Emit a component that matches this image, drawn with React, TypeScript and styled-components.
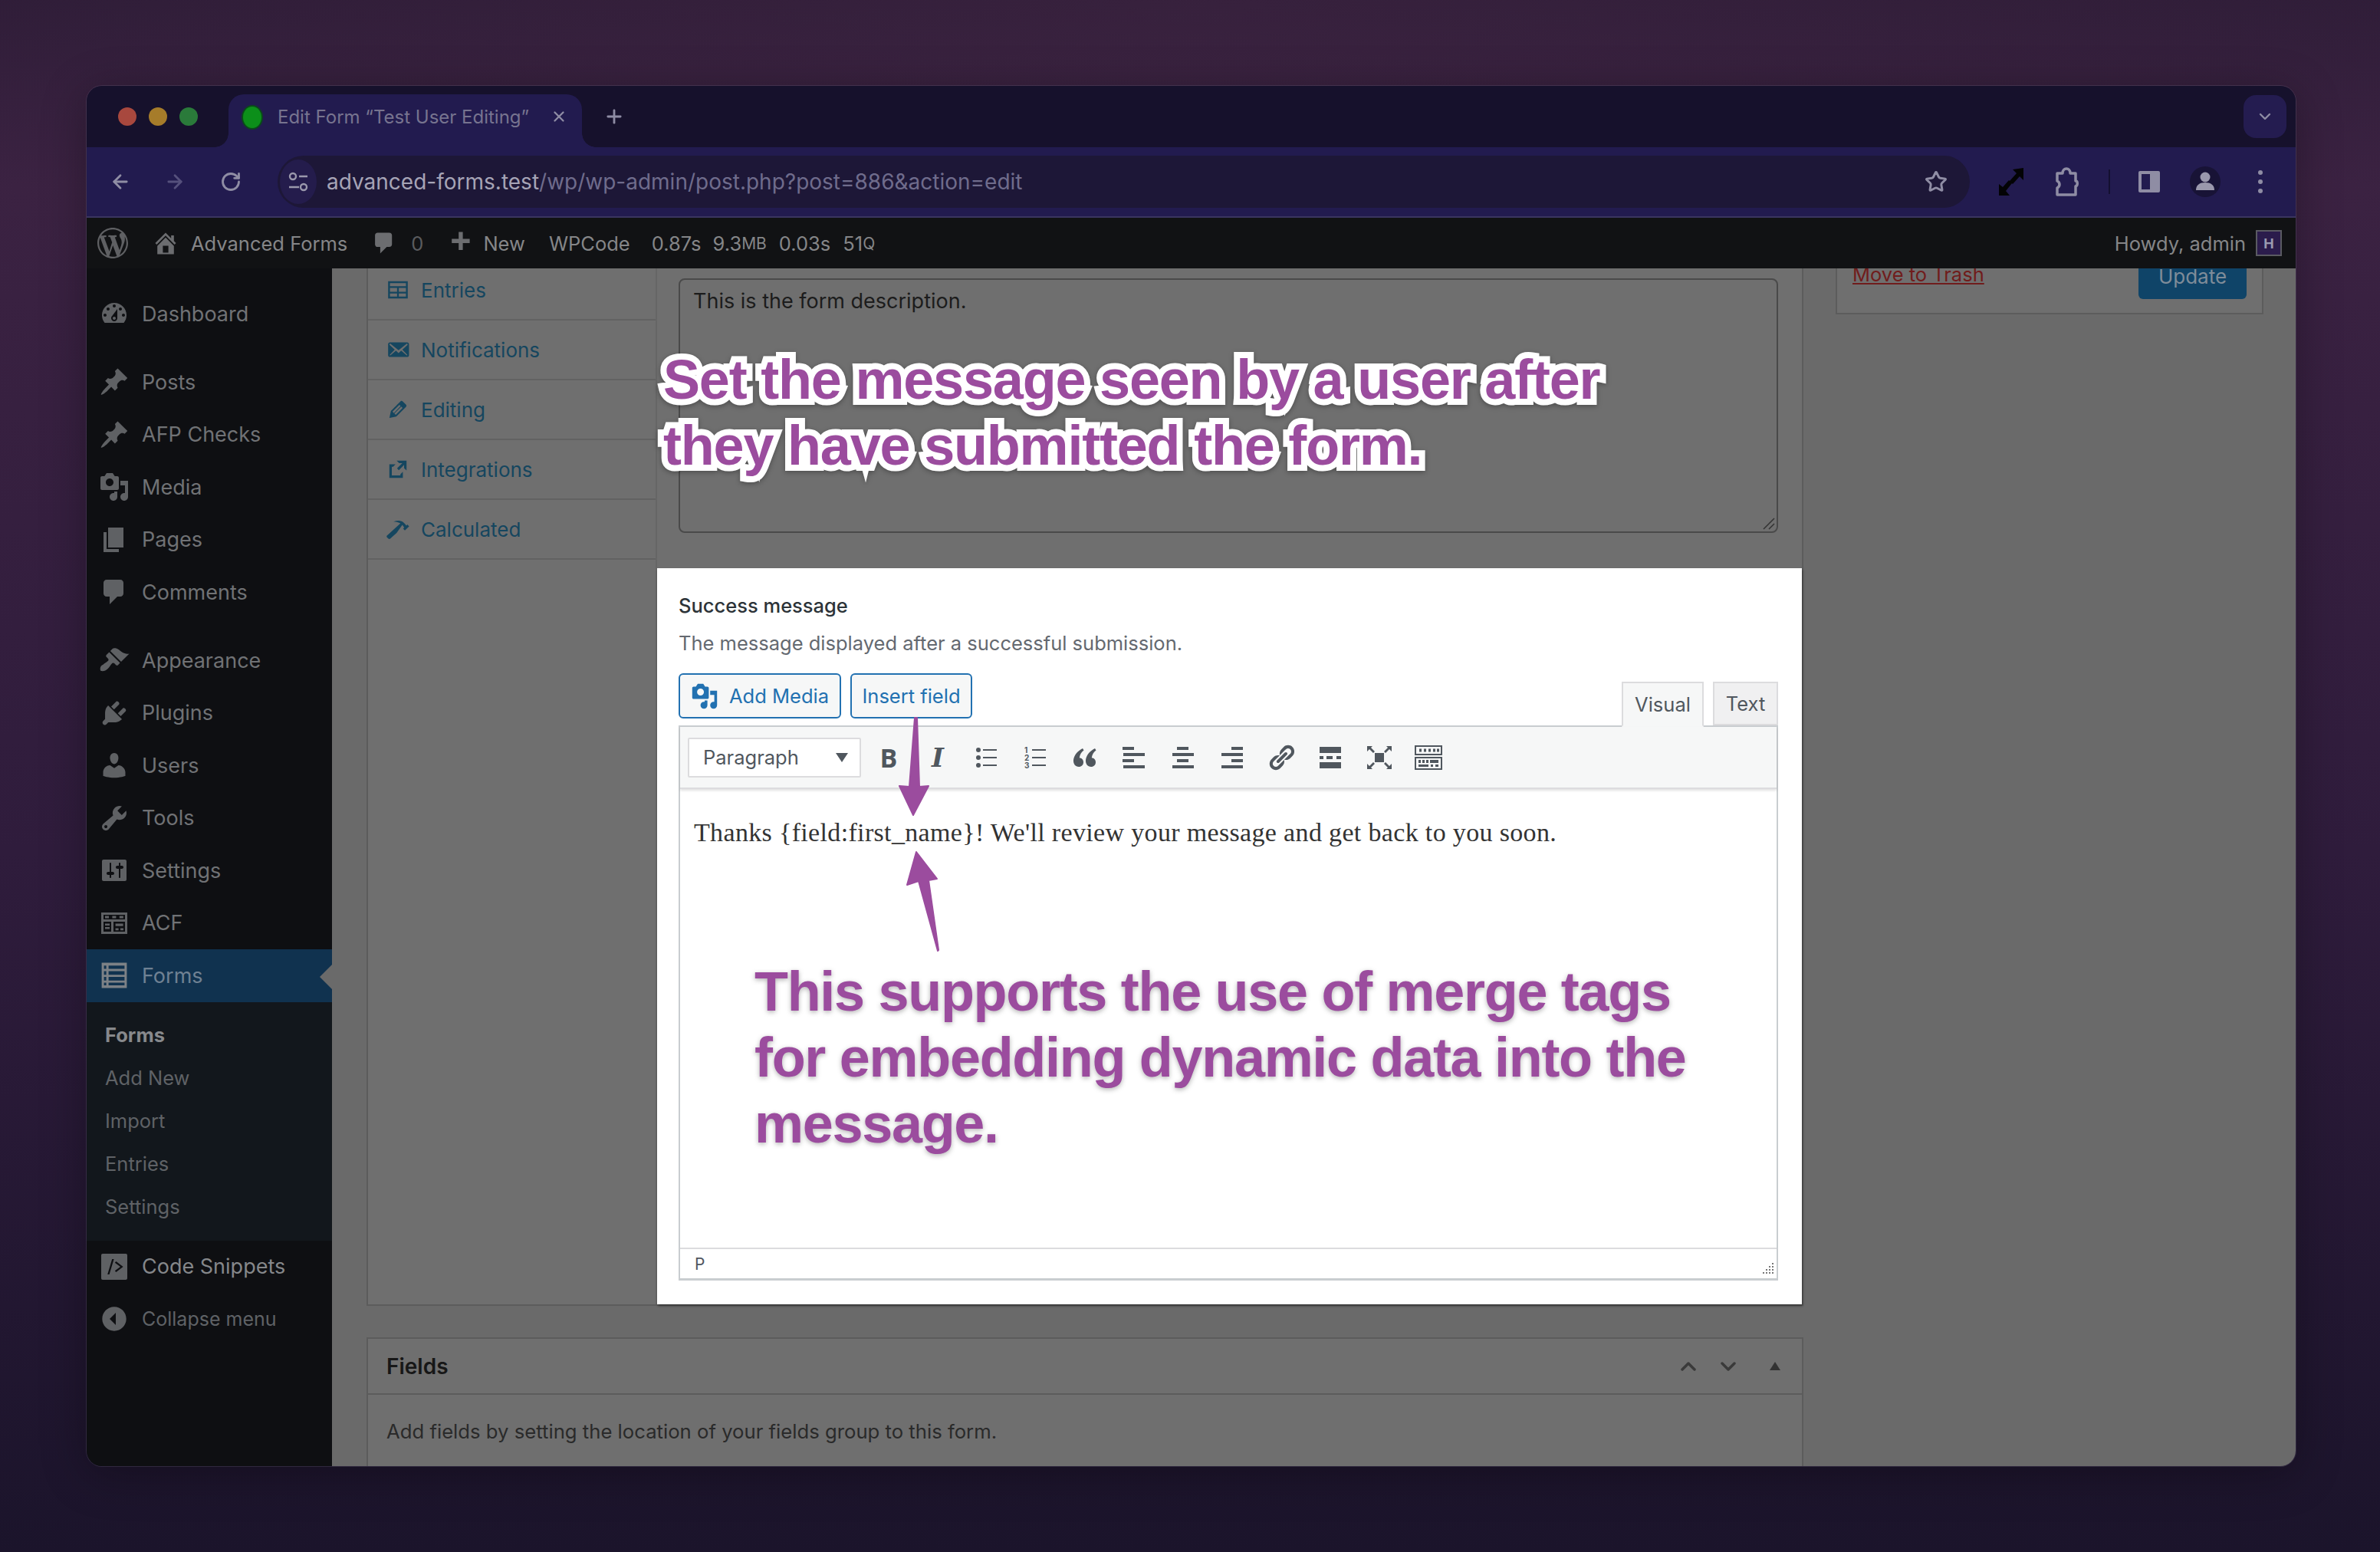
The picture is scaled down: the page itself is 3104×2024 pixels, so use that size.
import React from 'react';
import styled, { createGlobalStyle } from 'styled-components';
import { ArrowLeft, ArrowRight, RotateCw, Star, Plus, X, ChevronDown, ChevronUp } from 'lucide-react';

const GlobalStyle = createGlobalStyle`
  html, body { margin: 0; padding: 0; }
  body { width: 3104px; height: 2024px; overflow: hidden; font-family: Inter, "Liberation Sans", sans-serif; }
`;

// dashicons, 20x20 grid
const dash: Record<string, string> = {
  wp: 'M20 10c0-5.51-4.49-10-10-10C4.48 0 0 4.49 0 10c0 5.52 4.48 10 10 10 5.51 0 10-4.48 10-10zM7.78 15.37L4.37 6.22c.55-.02 1.17-.08 1.17-.08.5-.06.44-1.13-.06-1.11 0 0-1.45.11-2.37.11-.18 0-.37 0-.58-.01C4.12 2.69 6.87 1.11 10 1.11c2.33 0 4.45.87 6.05 2.34-.68-.11-1.65.39-1.65 1.58 0 .74.45 1.36.9 2.1.35.61.55 1.36.55 2.46 0 1.49-1.4 5-1.4 5l-3.03-8.37c.54-.02.82-.17.82-.17.5-.05.44-1.25-.06-1.22 0 0-1.44.12-2.38.12-.87 0-2.33-.12-2.33-.12-.5-.03-.56 1.2-.06 1.22l.92.08 1.26 3.41zM17.41 10c.24-.64.74-1.87.43-4.25.7 1.29 1.05 2.71 1.05 4.25 0 3.29-1.73 6.24-4.4 7.78.97-2.59 1.94-5.2 2.92-7.78zM6.1 18.09C3.12 16.65 1.11 13.53 1.11 10c0-1.3.23-2.48.72-3.59C3.25 10.3 4.67 14.2 6.1 18.09zm4.03-6.63l2.58 6.98c-.86.29-1.76.45-2.71.45-.79 0-1.57-.11-2.29-.33.81-2.38 1.62-4.74 2.42-7.1z',
  home: 'M16 8.5l1.53 1.53-1.06 1.06L10 4.62l-6.47 6.47-1.06-1.06L10 2.5l4 4v-2h2v4zm-6-2.46l6 5.99V18H4v-5.97zM12 17v-5H8v5h4z',
  comment: 'M5 2h9c1.1 0 2 .9 2 2v7c0 1.1-.9 2-2 2h-2l-5 5v-5H5c-1.1 0-2-.9-2-2V4c0-1.1.9-2 2-2z',
  plus: 'M17 7v3h-5v5H9v-5H4V7h5V2h3v5h5z',
  dashboard: 'M3.76 16h12.48c1.1-1.37 1.76-3.11 1.76-5 0-4.42-3.58-8-8-8s-8 3.58-8 8c0 1.89.66 3.63 1.76 5zM10 4c.55 0 1 .45 1 1s-.45 1-1 1-1-.45-1-1 .45-1 1-1zM6 6c.55 0 1 .45 1 1s-.45 1-1 1-1-.45-1-1 .45-1 1-1zm8 0c.55 0 1 .45 1 1s-.45 1-1 1-1-.45-1-1 .45-1 1-1zm-5.37 5.55L12 7v6c0 1.1-.9 2-2 2s-2-.9-2-2c0-.57.24-1.08.63-1.45zM4 10c.55 0 1 .45 1 1s-.45 1-1 1-1-.45-1-1 .45-1 1-1zm12 0c.55 0 1 .45 1 1s-.45 1-1 1-1-.45-1-1 .45-1 1-1zm-5 3c0-.55-.45-1-1-1s-1 .45-1 1 .45 1 1 1 1-.45 1-1z',
  pin: 'M10.44 3.02l1.82-1.82 6.36 6.35-1.83 1.82c-1.05-.68-2.48-.57-3.41.36l-.75.75c-.92.93-1.04 2.35-.35 3.41l-1.83 1.82-2.41-2.41-2.8 2.79c-.42.42-3.38 2.71-3.8 2.29s1.86-3.39 2.28-3.81l2.79-2.79L4.1 9.36l1.83-1.82c1.05.69 2.48.57 3.4-.36l.75-.75c.93-.92 1.05-2.35.36-3.41z',
  media: 'M13 11V4c0-.55-.45-1-1-1h-1.67L9 1H5L3.67 3H2c-.55 0-1 .45-1 1v7c0 .55.45 1 1 1h10c.55 0 1-.45 1-1zM7 4.5c1.38 0 2.5 1.12 2.5 2.5S8.38 9.5 7 9.5 4.5 8.38 4.5 7 5.62 4.5 7 4.5zM14 6h5v10.5c0 1.38-1.12 2.5-2.5 2.5S14 17.88 14 16.5s1.12-2.5 2.5-2.5c.17 0 .34.02.5.05V9h-3V6zm-4 8.05V13h2v3.5c0 1.38-1.12 2.5-2.5 2.5S7 17.88 7 16.5 8.12 14 9.5 14c.17 0 .34.02.5.05z',
  page: 'M6 15V2h10v13H6zm-1 1h8v2H3V5h2v11z',
  appearance: 'M14.48 11.06L7.41 3.99l1.5-1.5c.5-.56 2.3-.47 3.51.32 1.21.8 1.43 1.28 2.91 2.1 1.18.64 2.45 1.26 4.45.85zm-.71.71L6.7 4.7 4.93 6.47c-.39.39-.39 1.02 0 1.41l1.06 1.06c.39.39.39 1.03 0 1.42-.6.6-1.43 1.11-2.21 1.69-.35.26-.7.53-1.01.84C1.43 13.23.4 14.95 1.1 16.9c1.9.7 3.67-.33 4.99-1.67.31-.31.58-.66.84-1.01.58-.78 1.09-1.61 1.69-2.21.39-.39 1.03-.39 1.42 0l1.06 1.06c.39.39 1.02.39 1.41 0z',
  plugins: 'M13.11 4.36L9.87 7.6 8 5.73l3.24-3.24c.35-.34 1.05-.2 1.56.32.52.51.66 1.21.31 1.55zm-8 1.77l.91-1.12 9.01 9.01-1.19.84c-.71.71-2.63 1.16-3.82 1.16H6.14L4.9 17.26c-.59.59-1.54.59-2.12 0-.59-.58-.59-1.53 0-2.12l1.24-1.24v-3.88c0-1.13.4-3.19 1.09-3.89zm7.26 3.97l3.24-3.24c.34-.35 1.04-.21 1.55.31.52.51.66 1.21.31 1.55l-3.24 3.25z',
  users: 'M10 9.25c-2.27 0-2.73-3.44-2.73-3.44C7 4.02 7.82 2 9.97 2c2.16 0 2.98 2.02 2.71 3.81 0 0-.41 3.44-2.68 3.44zm0 2.57L12.72 10c2.39 0 4.52 2.33 4.52 4.53v2.49s-3.65 1.13-7.24 1.13c-3.65 0-7.24-1.13-7.24-1.13v-2.49c0-2.25 1.94-4.48 4.47-4.48z',
  tools: 'M16.68 9.77c-1.34 1.34-3.3 1.67-4.95.99l-5.41 6.52c-.99.99-2.59.99-3.58 0s-.99-2.59 0-3.57l6.52-5.42c-.68-1.65-.35-3.61.99-4.95 1.28-1.28 3.12-1.62 4.72-1.06l-2.89 2.89 2.82 2.82 2.86-2.87c.53 1.58.18 3.39-1.08 4.65zM3.81 16.21c.4.39 1.04.39 1.43 0 .4-.4.4-1.04 0-1.43-.39-.4-1.03-.4-1.43 0-.39.39-.39 1.03 0 1.43z',
  settings: 'M18 16V4c0-.55-.45-1-1-1H3c-.55 0-1 .45-1 1v12c0 .55.45 1 1 1h14c.55 0 1-.45 1-1zM8 11h1c.55 0 1 .45 1 1s-.45 1-1 1H8v1.5c0 .28-.22.5-.5.5s-.5-.22-.5-.5V13H6c-.55 0-1-.45-1-1s.45-1 1-1h1V5.5c0-.28.22-.5.5-.5s.5.22.5.5V11zm5-2h-1c-.55 0-1-.45-1-1s.45-1 1-1h1V5.5c0-.28.22-.5.5-.5s.5.22.5.5V7h1c.55 0 1 .45 1 1s-.45 1-1 1h-1v5.5c0 .28-.22.5-.5.5s-.5-.22-.5-.5V9z',
  acf: 'M1.5 3h17v14h-17zM3 4.5v3h14v-3zM3 9v6.5h5V9zm6.5 0v6.5H17V9zM4 5.3h2.5v1.4H4zm4.7 0h2.5v1.4H8.7zm4.7 0h2.5v1.4h-2.5zM4 10.3h3v1.2H4zm0 2.2h3v1.2H4zm6.8-2.2h5v1.6h-5zm0 3h2v1.3h-2zm3.2 0h2v1.3h-2z',
  forms: 'M1.8 1.8h16.4v16.4H1.8zM3.3 3.6v2.2h1.5V3.6zm3 0v2.2h10.4V3.6zM3.3 7.2v2.4h1.5V7.2zm3 0v2.4h10.4V7.2zM3.3 11v2.4h1.5V11zm3 0v2.4h10.4V11zm-3 3.8v1.7h1.5v-1.7zm3 0v1.7h10.4v-1.7z',
  snippets: 'M2.5 1.5h15c.6 0 1 .4 1 1v15c0 .6-.4 1-1 1h-15c-.6 0-1-.4-1-1v-15c0-.6.4-1 1-1zM8.6 5l-3 10h1.2l3-10zm2.6 1.5l-.8.9L14 10l-3.6 2.6.8.9L15.8 10z',
  collapse: 'M10 2.16c4.33 0 7.84 3.51 7.84 7.84s-3.51 7.84-7.84 7.84S2.16 14.33 2.16 10C2.17 5.67 5.67 2.16 10 2.16zM11 14V6l-4 4z',
  entries: 'M2 3h16v14H2zM3.5 4.5V7h13V4.5zm0 4v3h5.8v-3zm7.2 0v3h5.8v-3zm-7.2 4.5v2.5h5.8V13zm7.2 0v2.5h5.8V13z',
  email: 'M19 14.5v-9c0-.83-.67-1.5-1.5-1.5H3.49c-.83 0-1.5.67-1.5 1.5v9c0 .83.67 1.5 1.5 1.5H17.5c.83 0 1.5-.67 1.5-1.5zm-1.31-9.11c.33.33.15.67-.03.84L13.6 9.95l3.9 4.06c.12.14.2.36.06.51-.13.16-.43.15-.56.05l-4.37-3.73-2.14 1.95-2.13-1.95-4.37 3.73c-.13.1-.43.11-.56-.05-.14-.15-.06-.37.06-.51l3.9-4.06-4.06-3.72c-.18-.17-.36-.51-.03-.84s.67-.17.95.07l6.24 5.04 6.25-5.04c.28-.24.62-.4.95-.07z',
  edit: 'M13.89 3.39l2.71 2.72c.46.46.42 1.24.03 1.64l-8.01 8.02-5.56 1.16 1.16-5.58s7.6-7.63 7.99-8.03c.39-.39 1.22-.39 1.68.07zm-2.73 2.79l-5.59 5.61 1.11 1.11 5.54-5.65zm-2.97 8.23l5.58-5.6-1.07-1.08-5.59 5.6z',
  external: 'M9 3h8v8l-2-2V6.41l-4.29 4.3-1.42-1.42L13.59 5H11L9 3zM3 6h5l-2 2H5v7h7v-1l2-2v5H3V6z',
  hammer: 'M17.7 6.32l1.41 1.42-3.47 3.41-1.42-1.42.84-.82c-.32-.76-.81-1.57-1.51-2.31l-4.61 6.59-5.26 4.7c-.39.39-1.02.39-1.42 0l-1.2-1.21c-.39-.39-.39-1.02 0-1.41l10.97-9.92c-1.37-.86-3.21-1.46-5.67-1.48 2.7-.82 4.95-.93 6.58-.3 1.7.66 2.82 2.2 3.91 3.58z',
  link: 'M17.74 2.76c1.68 1.69 1.68 4.41 0 6.1l-1.53 1.52c-1.12 1.12-2.7 1.47-4.14 1.09l2.62-2.61.76-.77.76-.76c.84-.84.84-2.2 0-3.04-.84-.85-2.2-.85-3.04 0l-.77.76-3.38 3.38c-.37-1.44-.02-3.02 1.1-4.14l1.52-1.53c1.69-1.68 4.42-1.68 6.1 0zM8.59 13.43l5.34-5.34c.42-.42.42-1.1 0-1.52-.44-.43-1.13-.39-1.53 0l-5.33 5.34c-.42.42-.42 1.1 0 1.52.44.43 1.13.39 1.52 0zm-.76 2.29l4.14-4.15c.38 1.44.03 3.02-1.09 4.14l-1.52 1.53c-1.69 1.68-4.41 1.68-6.1 0-1.68-1.68-1.68-4.42 0-6.1l1.53-1.52c1.12-1.12 2.7-1.47 4.14-1.1l-4.14 4.15c-.85.84-.85 2.2 0 3.05.84.84 2.2.84 3.04 0z',
};

const Dash = ({ name, size, color }: { name: string; size: number; color: string }) => (
  <svg width={size} height={size} viewBox="0 0 20 20" fill={color} fillRule="evenodd" style={{ flex: 'none' }}>
    <path d={dash[name]} />
  </svg>
);

const Page = styled.div`
  position: relative;
  width: 3104px;
  height: 2024px;
  padding: 112px 110px 112px 113px;
  box-sizing: border-box;
  overflow: hidden;
  background:
    radial-gradient(1700px 700px at 50% 0, rgba(70, 40, 70, 0.35), transparent 100%),
    linear-gradient(180deg, #2f1d38 0, #3b2242 12%, #2f1c3c 55%, #1b142b 100%);
`;

const Window = styled.div`
  width: 2881px;
  height: 1800px;
  display: flex;
  flex-direction: column;
  overflow: hidden;
  border-radius: 20px;
  box-shadow: 0 0 0 1px rgba(120, 110, 140, 0.25), 0 10px 60px rgba(0, 0, 0, 0.3);
`;

const TabStrip = styled.div`
  height: 80px;
  flex: none;
  display: flex;
  align-items: center;
  background: #16112c;
  padding: 0 12px 0 41px;
`;

const Lights = styled.div`
  display: flex;
  gap: 16px;
  margin-right: 40px;
`;

const Light = styled.span<{ $c: string }>`
  width: 24px;
  height: 24px;
  border-radius: 50%;
  background: ${p => p.$c};
`;

const Tab = styled.div`
  position: relative;
  align-self: flex-end;
  width: 461px;
  height: 69px;
  box-sizing: border-box;
  background: #221b4f;
  border-radius: 20px 20px 0 0;
  display: flex;
  align-items: flex-start;
  padding: 16px 0 0 19px;
  color: #77748f;
  font-size: 24px;
  line-height: 28px;
  white-space: nowrap;

  &::before,
  &::after {
    content: '';
    position: absolute;
    bottom: 0;
    width: 18px;
    height: 18px;
  }
  &::before {
    left: -18px;
    background: radial-gradient(circle at 0 0, transparent 17.5px, #221b4f 18px);
  }
  &::after {
    right: -18px;
    background: radial-gradient(circle at 100% 0, transparent 17.5px, #221b4f 18px);
  }
`;

const Favicon = styled.span`
  width: 24px;
  height: 28px;
  border-radius: 50%;
  background: #0c8f1a;
  box-shadow: 0 0 0 2px #0a4a1a;
  margin-right: 21px;
  flex: none;
`;

const TabTitle = styled.span`
  width: 328px;
  flex: none;
`;

const TabClose = styled.span`
  display: flex;
  margin: 2px 0 0 28px;
  color: #8e8ca4;
`;

const NewTab = styled.span`
  display: flex;
  margin: 0 0 0 28px;
  color: #8e8ca4;
`;

const TabListButton = styled.span`
  margin-left: auto;
  width: 56px;
  height: 56px;
  border-radius: 16px;
  background: #241c50;
  display: flex;
  align-items: center;
  justify-content: center;
  color: #8e8ca4;
`;

const Toolbar = styled.div`
  height: 92px;
  flex: none;
  box-sizing: border-box;
  display: flex;
  align-items: center;
  background: #221b4f;
  border-bottom: 2px solid #3a3560;
  padding: 0 0 0 30px;
  color: #8f8da4;
`;

const NavIcon = styled.span<{ $w: number; $dim?: boolean }>`
  width: ${p => p.$w}px;
  flex: none;
  display: flex;
  color: ${p => (p.$dim ? '#55507c' : '#8f8da4')};
`;

const Omnibox = styled.div`
  width: 2207px;
  height: 68px;
  flex: none;
  margin: 0 0 0 23px;
  border-radius: 34px;
  background: #1d1737;
  display: flex;
  align-items: center;
  padding: 0 29px 0 3px;
  box-sizing: border-box;
  font-size: 28px;
  white-space: nowrap;
`;

const SiteChip = styled.span`
  width: 48px;
  height: 58px;
  border-radius: 50%;
  background: #241c4c;
  display: flex;
  align-items: center;
  justify-content: center;
  margin-right: 13px;
  flex: none;
`;

const Host = styled.span`
  color: #a6a4b6;
`;

const UrlPath = styled.span`
  color: #6f6c8c;
`;

const StarWrap = styled.span`
  margin-left: auto;
  display: flex;
`;

const ToolButtons = styled.div`
  display: flex;
  align-items: center;
`;

const ToolSlot = styled.span<{ $w: number }>`
  width: ${p => p.$w}px;
  flex: none;
  display: flex;
  justify-content: center;
`;

const ToolDivider = styled.span`
  width: 2px;
  height: 32px;
  background: #131030;
  flex: none;
`;

const AdminBar = styled.div`
  height: 66px;
  flex: none;
  display: flex;
  align-items: center;
  background: #111214;
  color: #858688;
  font-size: 25.5px;
  white-space: nowrap;
  padding: 0 18px 0 14px;
`;

const BarItem = styled.span<{ $ml?: number | 'auto'; $c?: string }>`
  display: flex;
  align-items: center;
  margin-left: ${p => (p.$ml === 'auto' ? 'auto' : `${p.$ml ?? 0}px`)};
  color: ${p => p.$c ?? 'inherit'};
`;

const Small = styled.span`
  font-size: 21px;
`;

const Avatar = styled.span`
  width: 34px;
  height: 34px;
  box-sizing: border-box;
  margin-left: 13px;
  border: 2px solid #5a5a62;
  background: #2b1c4c;
  color: #9a9ab0;
  font-size: 18px;
  font-weight: 700;
  display: flex;
  align-items: center;
  justify-content: center;
`;

const Body = styled.div`
  flex: 1;
  min-height: 0;
  display: flex;
`;

const Sidebar = styled.nav`
  width: 320px;
  flex: none;
  background: #0e0f12;
  padding-top: 25px;
  box-sizing: border-box;
  color: #707275;
  font-size: 27px;
`;

const MenuRow = styled.div<{ $active?: boolean; $sep?: boolean; $bright?: boolean }>`
  position: relative;
  height: 68.5px;
  margin-top: ${p => (p.$sep ? 20.5 : 0)}px;
  display: flex;
  align-items: center;
  gap: 16px;
  padding-left: 16px;
  background: ${p => (p.$active ? '#10324f' : 'transparent')};
  color: ${p => (p.$active ? '#6f8193' : p.$bright ? '#85878a' : 'inherit')};
  white-space: nowrap;

  ${p =>
    p.$active &&
    `&::after {
      content: '';
      position: absolute;
      right: 0;
      top: 20px;
      border: 16px solid transparent;
      border-right-color: #6a6a6a;
      border-left-width: 0;
    }`}
`;

const SubMenu = styled.div`
  background: #12171c;
  padding: 15px 0 16px;
`;

const SubRow = styled.div<{ $current?: boolean }>`
  height: 56px;
  line-height: 56px;
  padding-left: 24px;
  font-size: 25.5px;
  font-weight: ${p => (p.$current ? 700 : 400)};
  color: ${p => (p.$current ? '#87898c' : '#5f6266')};
`;

const CollapseRow = styled.div`
  height: 60px;
  margin-top: 4px;
  display: flex;
  align-items: center;
  gap: 16px;
  padding-left: 16px;
  font-size: 25px;
  color: #5f6266;
`;

const Content = styled.main`
  flex: 1;
  min-width: 0;
  display: flex;
  gap: 42px;
  padding-left: 45px;
  background: #6a6a6a;
  overflow: hidden;
`;

const MainColumn = styled.div`
  width: 1874px;
  flex: none;
  margin-top: -10px;
`;

const SettingsPanel = styled.section`
  display: flex;
  height: 1363px;
  box-sizing: border-box;
  background: #6f6f6f;
  border: solid #5c5c5c;
  border-width: 0 2px 2px 2px;
`;

const SubTabs = styled.div`
  width: 375px;
  flex: none;
  border-right: 2px solid #666;
`;

const SubTab = styled.div`
  height: 76px;
  border-bottom: 2px solid #626262;
  display: flex;
  align-items: center;
  gap: 14px;
  padding-left: 23px;
  color: #15465f;
  font-size: 26px;
`;

const FormColumn = styled.div`
  flex: 1;
  min-width: 0;
  padding-top: 23px;
`;

const DescriptionBox = styled.div`
  position: relative;
  height: 332px;
  box-sizing: border-box;
  margin: 0 31px 46px 28px;
  border: 2px solid #4a4a4a;
  border-radius: 8px;
  padding: 10px 17px;
  color: #1c1c1c;
  font-size: 27px;
  line-height: 36px;
`;

const Grip = styled.svg`
  position: absolute;
  right: 2px;
  bottom: 2px;
`;

const WhiteSection = styled.div`
  height: 960px;
  box-sizing: border-box;
  background: #fff;
  padding: 33px 31px 0 28px;
  box-shadow: 1px 2px 3px rgba(0, 0, 0, 0.45);
  position: relative;
`;

const FieldLabel = styled.div`
  font-size: 25.5px;
  line-height: 32px;
  font-weight: 500;
  color: #2c3338;
`;

const FieldHint = styled.div`
  font-size: 25.5px;
  line-height: 32px;
  margin-top: 17px;
  color: #646970;
`;

const EditorTools = styled.div`
  height: 68px;
  margin-top: 23px;
  display: flex;
  align-items: flex-start;
  gap: 12px;
`;

const OutlineButton = styled.button<{ $w: number }>`
  width: ${p => p.$w}px;
  height: 59px;
  box-sizing: border-box;
  padding: 0;
  border: 2px solid #2271b1;
  border-radius: 6px;
  background: #f6f7f7;
  color: #2271b1;
  font: 25.5px Inter, "Liberation Sans", sans-serif;
  display: flex;
  align-items: center;
  justify-content: center;
  gap: 14px;
`;

const EditorTabs = styled.div`
  margin-left: auto;
  align-self: flex-end;
  display: flex;
  gap: 12px;
  margin-bottom: -2px;
  position: relative;
`;

const EditorTab = styled.div<{ $active?: boolean }>`
  width: ${p => (p.$active ? 107 : 85)}px;
  height: ${p => (p.$active ? 59 : 57)}px;
  box-sizing: border-box;
  border: 2px solid #dcdcde;
  border-bottom-color: ${p => (p.$active ? '#f6f7f7' : '#dcdcde')};
  background: ${p => (p.$active ? '#f6f7f7' : '#f0f0f1')};
  color: #50575e;
  font-size: 25.5px;
  display: flex;
  align-items: center;
  justify-content: center;
`;

const EditorFrame = styled.div`
  border: 2px solid #c9cdd0;
  border-width: 2px 2px 3px;
  display: flex;
  flex-direction: column;
  height: 724px;
  box-sizing: border-box;
`;

const FormatBar = styled.div`
  height: 81px;
  flex: none;
  box-sizing: border-box;
  background: #f6f7f7;
  border-bottom: 2px solid #dcdcde;
  box-shadow: 0 2px 3px rgba(0, 0, 0, 0.12);
  display: flex;
  align-items: center;
  padding-left: 10px;
  position: relative;
`;

const FormatSelect = styled.div`
  width: 226px;
  height: 52px;
  box-sizing: border-box;
  flex: none;
  margin-right: 4px;
  background: #fff;
  border: 2px solid #dcdcde;
  border-radius: 2px;
  display: flex;
  align-items: center;
  justify-content: space-between;
  padding: 0 15px 0 18px;
  font-size: 25.5px;
  color: #50575e;
`;

const SelectCaret = styled.span`
  border: 8px solid transparent;
  border-top: 12px solid #50575e;
  border-bottom: 0;
`;

const FormatButton = styled.span`
  width: 64px;
  height: 40px;
  flex: none;
  display: flex;
  align-items: center;
  justify-content: center;
  color: #50575e;
`;

const BoldGlyph = styled.span`
  font: 700 34px "Open Sans", "Liberation Sans", sans-serif;
`;

const ItalicGlyph = styled.span`
  font: italic 700 34px "DejaVu Serif", "Liberation Serif", serif;
`;

const EditorBody = styled.div`
  flex: 1;
  padding: 37px 18px 0;
  font-family: "Liberation Serif", serif;
  font-size: 34px;
  line-height: 40px;
  color: #333;
  letter-spacing: 0.34px;
`;

const StatusBar = styled.div`
  height: 38px;
  flex: none;
  position: relative;
  border-top: 2px solid #dcdcde;
  padding-left: 19px;
  font-size: 21px;
  line-height: 40px;
  color: #50575e;
`;

const FieldsBox = styled.section`
  margin-top: 41px;
  height: 300px;
  box-sizing: border-box;
  background: #6f6f6f;
  border: 2px solid #5c5c5c;
`;

const FieldsHeader = styled.div`
  height: 73px;
  box-sizing: border-box;
  border-bottom: 2px solid #5c5c5c;
  display: flex;
  align-items: center;
  padding: 0 28px 0 24px;
  font-size: 28px;
  font-weight: 600;
  color: #171717;
`;

const FieldsControls = styled.div`
  margin-left: auto;
  display: flex;
  align-items: center;
  gap: 20px;
  color: #3a3a3a;
`;

const CollapseCaret = styled.span`
  margin-left: 18px;
  border: 7px solid transparent;
  border-bottom: 11px solid #333;
  border-top: 0;
`;

const FieldsText = styled.div`
  padding: 30px 24px;
  font-size: 25.7px;
  line-height: 36px;
  color: #2a2a2a;
`;

const SideColumn = styled.aside`
  width: 558px;
  flex: none;
`;

const PublishBox = styled.div`
  margin-top: -20px;
  height: 80px;
  box-sizing: border-box;
  background: #6f6f6f;
  border: 2px solid #5c5c5c;
  border-top: 0;
  padding: 0 20px;
  display: flex;
  justify-content: space-between;
`;

const TrashLink = styled.a`
  margin-top: 12px;
  font-size: 25.5px;
  line-height: 32px;
  height: 34px;
  color: #701c1c;
  text-decoration: underline;
`;

const UpdateButton = styled.button`
  width: 141px;
  height: 60px;
  border: 0;
  border-radius: 6px;
  padding: 0;
  background: #0f4468;
  color: #7f8c99;
  font: 26px Inter, "Liberation Sans", sans-serif;
`;

const Callout = styled.div<{ $left: number; $top: number; $outline?: boolean; $tight: number }>`
  position: absolute;
  left: ${p => p.$left}px;
  top: ${p => p.$top}px;
  font-family: "Liberation Sans", Arial, sans-serif;
  font-weight: 700;
  font-size: 72px;
  line-height: 86px;
  letter-spacing: ${p => p.$tight}px;
  color: #9b4c9e;
  white-space: pre;
  paint-order: stroke fill;
  -webkit-text-stroke: ${p => (p.$outline ? 16 : 0)}px #fff;
  filter: drop-shadow(0 2px 3px rgba(0, 0, 0, 0.3));
`;

const ArrowsLayer = styled.svg`
  position: absolute;
  left: 1150px;
  top: 920px;
`;

const menuTop = [
  { label: 'Posts', icon: 'pin', sep: true },
  { label: 'AFP Checks', icon: 'pin' },
  { label: 'Media', icon: 'media' },
  { label: 'Pages', icon: 'page' },
  { label: 'Comments', icon: 'comment' },
  { label: 'Appearance', icon: 'appearance', sep: true },
  { label: 'Plugins', icon: 'plugins' },
  { label: 'Users', icon: 'users' },
  { label: 'Tools', icon: 'tools' },
  { label: 'Settings', icon: 'settings' },
  { label: 'ACF', icon: 'acf' },
];

const subTabs = [
  { label: 'Entries', icon: 'entries' },
  { label: 'Notifications', icon: 'email' },
  { label: 'Editing', icon: 'edit' },
  { label: 'Integrations', icon: 'external' },
  { label: 'Calculated', icon: 'hammer' },
];

const subMenu = ['Add New', 'Import', 'Entries', 'Settings'];

const iconFill = '#5f6164';

const ListIcon = () => (
  <svg width="30" height="30" viewBox="0 0 30 30" fill="#50575e">
    {[5, 15, 25].map(y => (
      <circle key={y} cx="4" cy={y} r="3" />
    ))}
    {[5, 15, 25].map(y => (
      <rect key={y} x="10" y={y - 1} width="18" height="2" />
    ))}
  </svg>
);

const NumberedIcon = () => (
  <svg width="30" height="34" viewBox="0 0 30 34" fill="#50575e">
    {[1, 2, 3].map(n => (
      <text key={n} x="0" y={n * 10 + 1} fontSize="10" fontWeight="700" fontFamily="Inter, sans-serif">
        {n}
      </text>
    ))}
    {[7, 17, 27].map(y => (
      <rect key={y} x="10" y={y - 1} width="18" height="2" />
    ))}
  </svg>
);

const AlignIcon = ({ mode }: { mode: 'left' | 'center' | 'right' }) => {
  const shortX = mode === 'left' ? 0 : mode === 'center' ? 7 : 14;
  return (
    <svg width="30" height="30" viewBox="0 0 30 30" fill="#50575e">
      <rect x={shortX} y="1" width="15" height="4" />
      <rect x="1" y="9" width="28" height="4" />
      <rect x={shortX} y="17" width="15" height="4" />
      <rect x="1" y="25" width="28" height="4" />
    </svg>
  );
};

const QuoteIcon = () => (
  <svg width="32" height="26" viewBox="0 0 32 26" fill="#50575e">
    <path d="M13 1C7 4 2 9 1 16c-.5 5 2.5 9 7 9 3.5 0 6-2.5 6-6 0-3.2-2.3-5.5-5.2-5.7C9.5 9 11 6 14.5 3.5z" />
    <path d="M29 1c-6 3-11 8-12 15-.5 5 2.5 9 7 9 3.5 0 6-2.5 6-6 0-3.2-2.3-5.5-5.2-5.7C25.5 9 27 6 30.5 3.5z" />
  </svg>
);

const MoreIcon = () => (
  <svg width="30" height="30" viewBox="0 0 30 30" fill="#50575e">
    <rect x="1" y="1" width="28" height="8" />
    <rect x="1" y="13" width="5" height="4" />
    <rect x="10" y="13" width="8" height="4" />
    <rect x="23" y="13" width="6" height="4" />
    <rect x="1" y="21" width="28" height="8" />
  </svg>
);

const FullscreenIcon = () => (
  <svg width="34" height="32" viewBox="0 0 34 32" fill="#50575e">
    <rect x="11" y="10" width="12" height="12" />
    <path d="M1 1h7L6 3l5 5-2 2-5-5-3 3zM33 1h-7l2 2-5 5 2 2 5-5 3 3zM1 31h7l-2-2 5-5-2-2-5 5-3-3zM33 31h-7l2-2-5-5 2-2 5 5 3-3z" />
  </svg>
);

const KitchenIcon = () => (
  <svg width="36" height="32" viewBox="0 0 36 32" fill="#50575e">
    <path fillRule="evenodd" d="M0 0h36v13H0zM2 2v9h32V2zM0 15h36v17H0zM2 17v13h32V17z" />
    <path d="M6 4.5h3v4H6zm6 0h3v4h-3zm6 0h3v4h-3zm6 0h3v4h-3zm5 0h3v4h-3zM5 19h3v4H5zm5 0h3v4h-3zm5 0h3v4h-3zm5 0h11v4H20zM5 25h13v3H5zm16 0h3v3h-3zm6 0h4v3h-4z" />
  </svg>
);

export default function App() {
  return (
    <Page>
      <GlobalStyle />
      <Window>
        <TabStrip>
          <Lights>
            <Light $c="#a8483e" />
            <Light $c="#a67c2a" />
            <Light $c="#2a7a3a" />
          </Lights>
          <Tab>
            <Favicon />
            <TabTitle>Edit Form “Test User Editing”</TabTitle>
            <TabClose>
              <X size={22} strokeWidth={2.5} />
            </TabClose>
          </Tab>
          <NewTab>
            <Plus size={28} strokeWidth={2.4} />
          </NewTab>
          <TabListButton>
            <ChevronDown size={24} strokeWidth={2.4} />
          </TabListButton>
        </TabStrip>

        <Toolbar>
          <NavIcon $w={71}>
            <ArrowLeft size={28} strokeWidth={2.4} />
          </NavIcon>
          <NavIcon $w={73} $dim>
            <ArrowRight size={28} strokeWidth={2.4} />
          </NavIcon>
          <NavIcon $w={52}>
            <RotateCw size={28} strokeWidth={2.4} />
          </NavIcon>
          <Omnibox>
            <SiteChip>
              <svg width="26" height="26" viewBox="0 0 26 26" fill="none" stroke="#9a98ac" strokeWidth="2.4">
                <circle cx="6" cy="6" r="4" />
                <path d="M14 6h11M1 20h13" />
                <circle cx="20" cy="20" r="4" />
              </svg>
            </SiteChip>
            <Host>advanced-forms.test</Host>
            <UrlPath>/wp/wp-admin/post.php?post=886&amp;action=edit</UrlPath>
            <StarWrap>
              <Star size={30} strokeWidth={2.4} color="#8f8da4" />
            </StarWrap>
          </Omnibox>
          <ToolButtons>
            <ToolSlot $w={108}>
              <svg width="34" height="38" viewBox="0 0 34 38" fill="#030305">
                <path d="M33 1v16l-5-5-9 10-4-4 9-10-5-5zM1 37V22l5 4 8-9 4 4-8 10 5 6z" />
              </svg>
            </ToolSlot>
            <ToolSlot $w={38}>
              <svg width="30" height="40" viewBox="0 0 30 40" fill="none" stroke="#8f8da4" strokeWidth="3.5" strokeLinejoin="round">
                <path d="M2 9h7c0-8 10-8 10 0h7v10c3 0 3 6 0 7v11H2V28c4-2 4-7 0-9z" />
              </svg>
            </ToolSlot>
            <ToolSlot $w={72}>
              <ToolDivider />
            </ToolSlot>
            <ToolSlot $w={32}>
              <svg width="30" height="30" viewBox="0 0 30 30">
                <rect x="1" y="1" width="28" height="28" rx="2" fill="#8f8da4" />
                <rect x="5" y="5" width="11" height="20" fill="#221b4f" />
              </svg>
            </ToolSlot>
            <ToolSlot $w={114}>
              <svg width="40" height="40" viewBox="0 0 40 40">
                <circle cx="20" cy="20" r="20" fill="#181336" />
                <circle cx="20" cy="14" r="6.5" fill="#9a98ac" />
                <path d="M8 31c0-7 5-10 12-10s12 3 12 10z" fill="#9a98ac" />
              </svg>
            </ToolSlot>
            <ToolSlot $w={30}>
              <svg width="8" height="32" viewBox="0 0 8 32" fill="#8f8da4">
                <circle cx="4" cy="4" r="3" />
                <circle cx="4" cy="16" r="3" />
                <circle cx="4" cy="28" r="3" />
              </svg>
            </ToolSlot>
          </ToolButtons>
        </Toolbar>

        <AdminBar>
          <Dash name="wp" size={40} color="#5f6063" />
          <BarItem $ml={31}>
            <Dash name="home" size={36} color="#6c6d70" />
          </BarItem>
          <BarItem $ml={15}>Advanced Forms</BarItem>
          <BarItem $ml={31}>
            <Dash name="comment" size={34} color="#6c6d70" />
          </BarItem>
          <BarItem $ml={18} $c="#5a5b5e">0</BarItem>
          <BarItem $ml={30}>
            <Dash name="plus" size={36} color="#6c6d70" />
          </BarItem>
          <BarItem $ml={12}>New</BarItem>
          <BarItem $ml={31}>WPCode</BarItem>
          <BarItem $ml={28}>0.87s</BarItem>
          <BarItem $ml={15}>
            9.3<Small>MB</Small>
          </BarItem>
          <BarItem $ml={16}>0.03s</BarItem>
          <BarItem $ml={16}>
            51<Small>Q</Small>
          </BarItem>
          <BarItem $ml="auto">Howdy, admin</BarItem>
          <Avatar>H</Avatar>
        </AdminBar>

        <Body>
          <Sidebar>
            <MenuRow>
              <Dash name="dashboard" size={40} color={iconFill} />
              Dashboard
            </MenuRow>
            {menuTop.map(item => (
              <MenuRow key={item.label} $sep={item.sep}>
                <Dash name={item.icon} size={40} color={iconFill} />
                {item.label}
              </MenuRow>
            ))}
            <MenuRow $active>
              <Dash name="forms" size={40} color="#7c8186" />
              Forms
            </MenuRow>
            <SubMenu>
              <SubRow $current>Forms</SubRow>
              {subMenu.map(s => (
                <SubRow key={s}>{s}</SubRow>
              ))}
            </SubMenu>
            <MenuRow $bright>
              <Dash name="snippets" size={40} color={iconFill} />
              Code Snippets
            </MenuRow>
            <CollapseRow>
              <Dash name="collapse" size={40} color={iconFill} />
              Collapse menu
            </CollapseRow>
          </Sidebar>

          <Content>
            <MainColumn>
              <SettingsPanel>
                <SubTabs>
                  {subTabs.map(t => (
                    <SubTab key={t.label}>
                      <Dash name={t.icon} size={32} color="#15465f" />
                      {t.label}
                    </SubTab>
                  ))}
                </SubTabs>
                <FormColumn>
                  <DescriptionBox>
                    This is the form description.
                    <Grip width="18" height="18" viewBox="0 0 18 18" stroke="#333" strokeWidth="1.5">
                      <path d="M3 17L17 3M10 17l7-7" />
                    </Grip>
                  </DescriptionBox>
                  <WhiteSection>
                    <FieldLabel>Success message</FieldLabel>
                    <FieldHint>The message displayed after a successful submission.</FieldHint>
                    <EditorTools>
                      <OutlineButton $w={212}>
                        <Dash name="media" size={36} color="#2271b1" />
                        Add Media
                      </OutlineButton>
                      <OutlineButton $w={159}>Insert field</OutlineButton>
                      <EditorTabs>
                        <EditorTab $active>Visual</EditorTab>
                        <EditorTab>Text</EditorTab>
                      </EditorTabs>
                    </EditorTools>
                    <EditorFrame>
                      <FormatBar>
                        <FormatSelect>
                          Paragraph
                          <SelectCaret />
                        </FormatSelect>
                        <FormatButton>
                          <BoldGlyph>B</BoldGlyph>
                        </FormatButton>
                        <FormatButton>
                          <ItalicGlyph>I</ItalicGlyph>
                        </FormatButton>
                        <FormatButton>
                          <ListIcon />
                        </FormatButton>
                        <FormatButton>
                          <NumberedIcon />
                        </FormatButton>
                        <FormatButton>
                          <QuoteIcon />
                        </FormatButton>
                        <FormatButton>
                          <AlignIcon mode="left" />
                        </FormatButton>
                        <FormatButton>
                          <AlignIcon mode="center" />
                        </FormatButton>
                        <FormatButton>
                          <AlignIcon mode="right" />
                        </FormatButton>
                        <FormatButton>
                          <Dash name="link" size={38} color="#50575e" />
                        </FormatButton>
                        <FormatButton>
                          <MoreIcon />
                        </FormatButton>
                        <FormatButton>
                          <FullscreenIcon />
                        </FormatButton>
                        <FormatButton>
                          <KitchenIcon />
                        </FormatButton>
                      </FormatBar>
                      <EditorBody>Thanks {'{field:first_name}'}! We'll review your message and get back to you soon.</EditorBody>
                      <StatusBar>
                        P
                        <Grip width="20" height="20" viewBox="0 0 20 20" fill="#777">
                          {[
                            [16, 2], [16, 6], [12, 6], [16, 10], [12, 10], [8, 10], [16, 14], [12, 14], [8, 14], [4, 14],
                          ].map(([x, y]) => (
                            <rect key={`${x}-${y}`} x={x} y={y} width="2" height="2" />
                          ))}
                        </Grip>
                      </StatusBar>
                    </EditorFrame>
                  </WhiteSection>
                </FormColumn>
              </SettingsPanel>
              <FieldsBox>
                <FieldsHeader>
                  Fields
                  <FieldsControls>
                    <ChevronUp size={32} strokeWidth={2.6} />
                    <ChevronDown size={32} strokeWidth={2.6} />
                    <CollapseCaret />
                  </FieldsControls>
                </FieldsHeader>
                <FieldsText>Add fields by setting the location of your fields group to this form.</FieldsText>
              </FieldsBox>
            </MainColumn>
            <SideColumn>
              <PublishBox>
                <TrashLink>Move to Trash</TrashLink>
                <UpdateButton>Update</UpdateButton>
              </PublishBox>
            </SideColumn>
          </Content>
        </Body>
      </Window>

      <Callout $left={865} $top={452} $tight={-1.2} $outline>
        {'Set the message seen by a user after\nthey have submitted the form.'}
      </Callout>
      <Callout $left={984} $top={1250} $tight={-1.3}>
        {'This supports the use of merge tags\nfor embedding dynamic data into the\nmessage.'}
      </Callout>
      <ArrowsLayer width="90" height="330" viewBox="1150 920 90 330" fill="#9b4c9e" stroke="#9b4c9e" strokeWidth="2" strokeLinejoin="round">
        <path d="M1193 936h3l3 90 12-1-20 38-18-38 13 1z" />
        <path d="M1195 1111l27 35-11 2 13 91-1 1-25-91-15 5z" />
      </ArrowsLayer>
    </Page>
  );
}
